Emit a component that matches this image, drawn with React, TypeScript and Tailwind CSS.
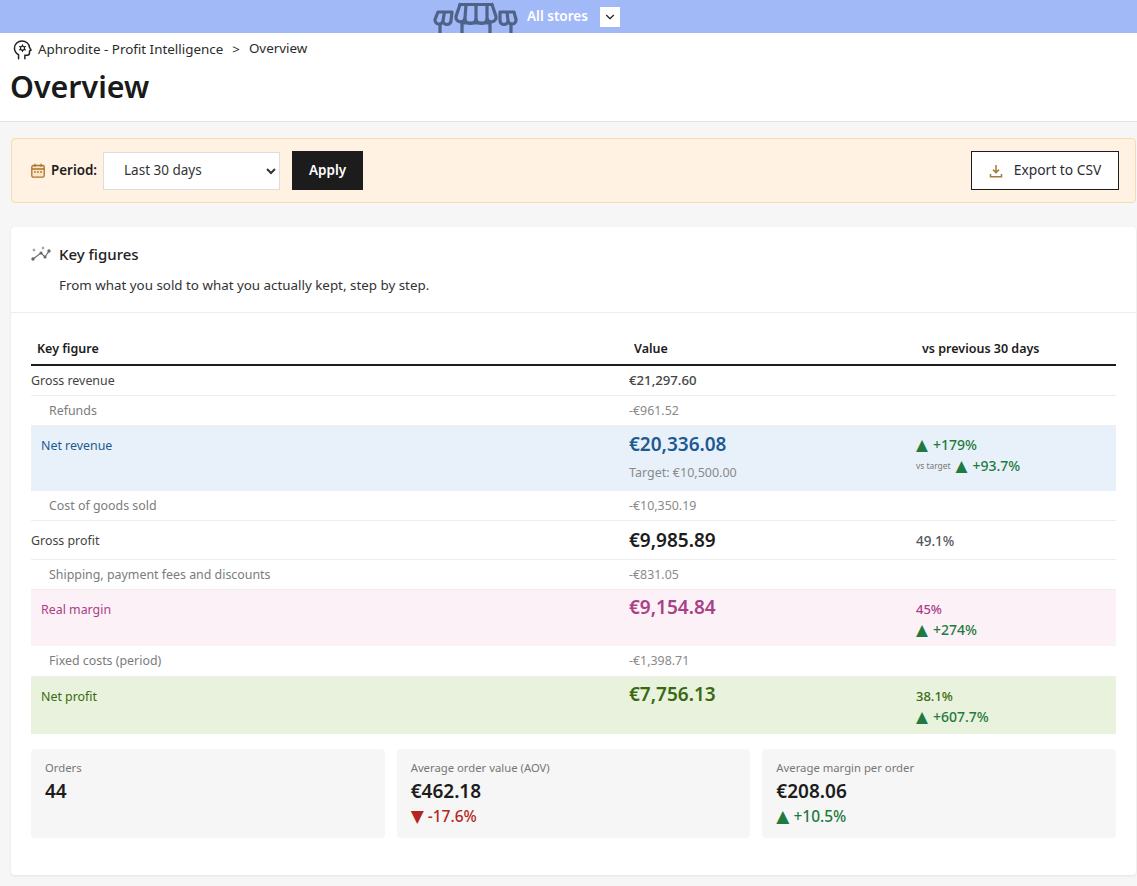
import React from "react";
import { ChevronDown } from "lucide-react";

const font = "font-['Noto_Sans','Liberation_Sans',sans-serif]";

function Store() {
  return (
    <svg width="90" height="33" viewBox="0 0 90 33" fill="none" stroke="#4f6288" strokeWidth="3.200" strokeLinejoin="round" strokeLinecap="round" className="block">
      <path d="M27 4.500h32" />
      <path d="M27 4.500l-4 12a4.500 4.500 0 0 0 9 1.500l1-13.500M32 18a5.500 5.500 0 0 0 11 0V4.500M43 18a5.500 5.500 0 0 0 11 0V4.500M54 18a4.500 4.500 0 0 0 9-1.500l-4-12" />
      <path d="M19 12H5l-3 7.500a4 4 0 0 0 8 1l1.500-8.500M10 20.500a4 4 0 0 0 8 0l1-8.500" />
      <path d="M67 12h14l2 7.500a4 4 0 0 1-8 1L74 12M75 20.500a4 4 0 0 1-8 0v-8.500" />
      <path d="M7 24v10M29 22v12M29 23h28M57 22v12M78 24v10" />
    </svg>
  );
}
function Head() {
  return (
    <svg width="21" height="21" viewBox="0 0 24 24" fill="none" stroke="#222" strokeWidth="1.700" strokeLinecap="round" strokeLinejoin="round" className="block">
      <path d="M7.500 22.500v-4.500C4.500 16.200 2.800 13.500 2.800 10.500 2.800 6 6.800 2.200 11.500 2.200c4.500 0 8 3.200 8.500 7.300l1.800 3.300-1.800.8v2.400c0 1.500-1 2.500-2.500 2.500h-2.800v4" />
      <circle cx="12" cy="10.500" r="2.300" strokeWidth="1.400" />
      <path d="M12 6.700v1M12 13.300v1M8.700 8.600l.9.5M14.400 11.900l.9.5M15.300 8.600l-.9.5M9.600 11.900l-.9.5" strokeWidth="1.300" />
    </svg>
  );
}
function Calendar() {
  return (
    <svg width="14" height="15" viewBox="0 0 14 15" fill="none" stroke="#a9742f" strokeWidth="1.300" className="block">
      <rect x="0.800" y="2.500" width="12.400" height="11.600" rx="1.300" fill="#fbe5c5" />
      <path d="M0.800 6h12.400M4 0.800v3M10 0.800v3" />
      <path d="M3 9h1.800M6.100 9h1.800M9.200 9h1.800" />
    </svg>
  );
}
function Download() {
  return (
    <svg width="14" height="14" viewBox="0 0 14 14" fill="none" stroke="#a47c3e" strokeWidth="1.500" className="block">
      <path d="M7 1v7.500M4 5.600L7 8.600l3-3" />
      <path d="M1.500 10v2.800h11V10" />
    </svg>
  );
}
function Trend() {
  return (
    <svg width="20" height="16" viewBox="0 0 20 16" fill="#666" stroke="#666" strokeWidth="1.100" strokeLinecap="round" className="block">
      <path d="M2 13l8-6 4 4 4-6" fill="none" />
      <circle cx="2" cy="13" r="1.100" />
      <circle cx="10" cy="7" r="1" />
      <circle cx="14" cy="11" r="1" />
      <circle cx="18" cy="5" r="1.100" />
      <path d="M3 3v2M2 4h2M12 1v2M11 2h2" strokeWidth="0.700" />
    </svg>
  );
}

function Up({ v }: { v: string }) {
  return (
    <span className="text-[14px] font-medium text-[#1f7a3f]">
      <span className="mr-[5px] font-['DejaVu_Sans',sans-serif] text-[15.500px] leading-none">▲</span>{v}
    </span>
  );
}

function Sub({ label, value }: { label: string; value: string }) {
  return (
    <div className="flex h-[30px] items-center border-b border-[#eeeeee] pt-[1px] text-[12.400px] text-[#7c7c7c]">
      <div className="w-[598px] pl-[18px]">{label}</div>
      <div className="text-[#8a8a8a]">{value}</div>
    </div>
  );
}

function Highlight({ bg, color, h, label, value, sub, right }: { bg: string; color: string; h: string; label: string; value: string; sub?: string; right: React.ReactNode }) {
  return (
    <div className={`flex ${h} ${bg} ${color}`}>
      <div className="w-[598px] pt-[11px] pl-[10px] text-[12.400px]">{label}</div>
      <div className="w-[287px]">
        <div className={`${sub ? "mt-[6px]" : "mt-[5px]"} text-[19px] leading-[24px] font-semibold`}>{value}</div>
        {sub && <div className="mt-[8px] text-[12.500px] text-[#8a8a8a]">{sub}</div>}
      </div>
      <div className="flex-1 pt-[9px] leading-[21px]">{right}</div>
    </div>
  );
}

function Tile({ label, value, delta, down }: { label: string; value: string; delta?: string; down?: boolean }) {
  return (
    <div className="h-[89px] rounded-[4px] bg-[#f6f6f6] px-[14px] pt-[11px]">
      <div className="text-[11.300px] leading-[16px] text-[#777777]">{label}</div>
      <div className="mt-[3px] text-[19px] leading-[24px] font-semibold text-[#1c1c1c]">{value}</div>
      {delta && (
        <div className={`mt-[3px] text-[15.500px] leading-[21px] font-medium ${down ? "text-[#b3261e]" : "text-[#1f7a3f]"}`}>
          <span className="mr-[4px] font-['DejaVu_Sans',sans-serif] text-[17px] leading-none">{down ? "▼" : "▲"}</span>{delta}
        </div>
      )}
    </div>
  );
}

export default function App() {
  return (
    <div className={`${font} h-[886px] w-[1137px] overflow-hidden bg-[#f6f6f6] text-[#1c1c1c]`}>
      <header className="flex h-[33px] items-center overflow-hidden bg-[#a2b9f8] pl-[433px]">
        <Store />
        <span className="ml-[4px] text-[13.500px] font-semibold text-white">All stores</span>
        <span className="ml-[12px] flex h-[20px] w-[20px] items-center justify-center bg-white">
          <ChevronDown size={14} strokeWidth={2} color="#222" />
        </span>
      </header>
      <div className="h-[89px] border-b border-[#e2e2e2] bg-white px-[11px]">
        <div className="flex h-[32px] items-center text-[13.400px] text-[#2b2b2b]">
          <span className="mr-[5px] ml-[1px] flex"><Head /></span>
          <span>Aphrodite - Profit Intelligence</span>
          <span className="mx-[9px]">&gt;</span>
          <span className="-mt-[2px]">Overview</span>
        </div>
        <h1 className="mt-[3px] -ml-[1px] text-[30.400px] leading-[38px] font-semibold text-[#1a1a1a]">Overview</h1>
      </div>

      <div className="mt-[16px] mr-[1px] ml-[11px] flex h-[65px] items-center rounded-[4px] border border-[#f9d9ae] bg-[#fff2e2] pr-[16px] pl-[19px]">
        <Calendar />
        <span className="ml-[6px] text-[13.400px] font-semibold">Period:</span>
        <select className="ml-[6px] h-[38px] w-[177px] border border-[#dddddd] bg-white pb-[1px] pl-[16px] text-[13.500px] text-[#333333]">
          <option>Last 30 days</option>
        </select>
        <button className="ml-[12px] h-[39px] w-[71px] bg-[#1c1c1c] text-[13.500px] font-semibold text-white">Apply</button>
        <button className="ml-auto flex h-[39px] w-[148px] items-center justify-center border border-[#1c1c1c] bg-white text-[13.800px] text-[#2b2b33]">
          <Download />
          <span className="ml-[11px]">Export to CSV</span>
        </button>
      </div>

      <section className="mt-[24px] mr-[1px] ml-[11px] h-[648px] rounded-[4px] bg-white shadow-[0_1px_3px_rgba(0,0,0,0.08)]">
        <div className="h-[86px] border-b border-[#ededed] pl-[20px]">
          <div className="flex h-[54px] items-center">
            <Trend />
            <span className="ml-[8px] text-[15px] font-medium text-[#222222]">Key figures</span>
          </div>
          <div className="-mt-[6px] pl-[28px] text-[13.360px] text-[#333333]">From what you sold to what you actually kept, step by step.</div>
        </div>

        <div className="mx-[20px] mt-[20px]">
          <div className="flex h-[33px] items-center border-b-2 border-[#1c1c1c] pt-[2px] text-[12.500px] font-semibold text-[#1c1c1c]">
            <div className="w-[603px] pl-[6px]">Key figure</div>
            <div className="w-[288px]">Value</div>
            <div>vs previous 30 days</div>
          </div>
          <div className="flex h-[30px] items-center border-b border-[#eeeeee] pt-[1px] text-[12.400px]">
            <div className="w-[598px] text-[#444444]">Gross revenue</div>
            <div className="text-[13.200px] font-medium text-[#444444]">€21,297.60</div>
          </div>
          <Sub label="Refunds" value="-€961.52" />
          <Highlight
            bg="bg-[#e8f1fa]" color="text-[#1d5a91]" h="h-[65px]" label="Net revenue" value="€20,336.08" sub="Target: €10,500.00"
            right={<div className="-mt-[1px]"><div><Up v="+179%" /></div><div className="flex items-center"><span className="mr-[5px] text-[8.400px] text-[#777777]">vs target</span><Up v="+93.7%" /></div></div>}
          />
          <Sub label="Cost of goods sold" value="-€10,350.19" />
          <div className="flex h-[39px] items-center border-b border-[#eeeeee]">
            <div className="w-[598px] pt-[2px] text-[12.400px] text-[#444444]">Gross profit</div>
            <div className="w-[287px] text-[19px] font-semibold text-[#1c1c1c]">€9,985.89</div>
            <div className="pt-[2px] text-[13.500px] font-medium text-[#555555]">49.1%</div>
          </div>
          <Sub label="Shipping, payment fees and discounts" value="-€831.05" />
          <Highlight
            bg="bg-[#fcf1f7]" color="text-[#aa4086]" h="h-[56px]" label="Real margin" value="€9,154.84"
            right={<><div className="text-[13px] leading-[20px] font-medium">45%</div><div><Up v="+274%" /></div></>}
          />
          <div className="flex h-[31px] items-center border-b border-[#eeeeee] text-[12.400px] text-[#7c7c7c]">
            <div className="w-[598px] pl-[18px]">Fixed costs (period)</div>
            <div className="text-[#8a8a8a]">-€1,398.71</div>
          </div>
          <Highlight
            bg="bg-[#e8f2dd]" color="text-[#3a6a10]" h="h-[57px]" label="Net profit" value="€7,756.13"
            right={<><div className="text-[13px] leading-[20px] font-medium">38.1%</div><div><Up v="+607.7%" /></div></>}
          />
        </div>

        <div className="mx-[20px] mt-[15px] grid grid-cols-3 gap-[12px]">
          <Tile label="Orders" value="44" />
          <Tile label="Average order value (AOV)" value="€462.18" delta="-17.6%" down />
          <Tile label="Average margin per order" value="€208.06" delta="+10.5%" />
        </div>
      </section>
    </div>
  );
}
